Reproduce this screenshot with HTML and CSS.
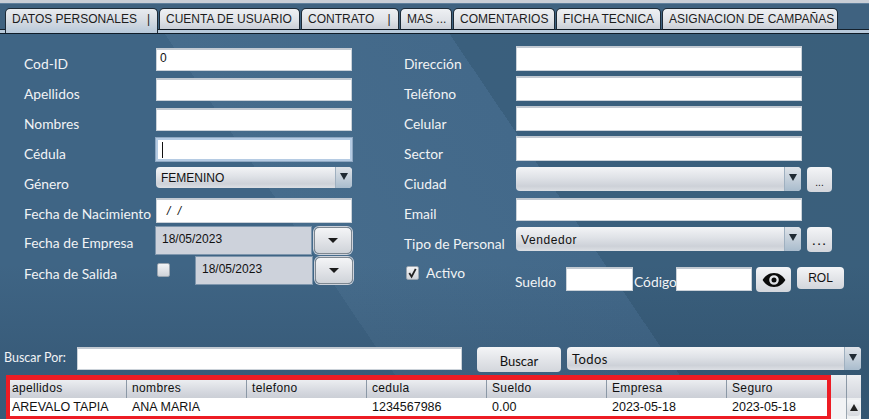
FILE: index.html
```html
<!DOCTYPE html>
<html lang="es">
<head>
<meta charset="utf-8">
<title>Datos personales</title>
<link rel="stylesheet" href="styles.css">
</head>
<body>
<div class="app">
  <nav class="tabs">
    <span class="tab tab-active w1">DATOS PERSONALES &nbsp;&nbsp;|</span>
    <span class="tab w2">CUENTA DE USUARIO</span>
    <span class="tab w3">CONTRATO &nbsp;&nbsp;&nbsp;|</span>
    <span class="tab w4">MAS ...</span>
    <span class="tab w5">COMENTARIOS</span>
    <span class="tab w6">FICHA TECNICA</span>
    <span class="tab w7">ASIGNACION DE CAMPAÑAS</span>
  </nav>
  <main class="panel">
    <section class="form">
      <div class="col col-left">
        <label class="lbl">Cod-ID</label><div class="field tb">0</div>
        <label class="lbl">Apellidos</label><div class="field"></div>
        <label class="lbl">Nombres</label><div class="field"></div>
        <label class="lbl">Cédula</label><div class="field focus"><span class="caret"></span></div>
        <label class="lbl">Género</label>
        <div class="combo combo-gen"><span class="combo-text gen-text">FEMENINO</span><span class="arrow"><i></i></span></div>
        <label class="lbl">Fecha de Nacimiento</label><div class="field tall date-mask">/ /</div>
        <label class="lbl lbl-dt">Fecha de Empresa</label>
        <div class="date-row">
          <div class="date-box">18/05/2023</div>
          <button class="spin"><i></i></button>
        </div>
        <label class="lbl">Fecha de Salida</label>
        <div class="date-row">
          <span class="check"></span>
          <div class="date-box date-short">18/05/2023</div>
          <button class="spin"><i></i></button>
        </div>
      </div>
      <div class="col col-right">
        <label class="lbl">Dirección</label><div class="field wide"></div>
        <label class="lbl">Teléfono</label><div class="field wide"></div>
        <label class="lbl">Celular</label><div class="field wide"></div>
        <label class="lbl">Sector</label><div class="field wide"></div>
        <label class="lbl">Ciudad</label>
        <div class="combo-line">
          <div class="combo combo-city"><span class="combo-text"></span><span class="arrow"><i></i></span></div>
          <button class="mini small-dots">...</button>
        </div>
        <label class="lbl">Email</label><div class="field wide short"></div>
        <label class="lbl">Tipo de Personal</label>
        <div class="combo-line">
          <div class="combo combo-city"><span class="combo-text spaced">Vendedor</span><span class="arrow"><i></i></span></div>
          <button class="mini big-dots">...</button>
        </div>
        <div class="active"><span class="check checked"><svg viewBox="0 0 12 12"><path d="M2.500 6 L5 10 L9.500 1.500" fill="none" stroke="#222" stroke-width="2"/></svg></span><span class="lbl-inline">Activo</span></div>
        <div class="money">
          <span class="lbl-inline sueldo">Sueldo</span>
          <div class="field f-sueldo"></div>
          <span class="lbl-inline codigo">Código</span>
          <div class="field f-codigo"></div>
          <button class="eye-btn"><svg viewBox="0 0 24 16" width="24" height="16"><path fill-rule="evenodd" d="M12 1C6.500 1 2.600 4.600 .6 8c2 3.400 5.900 7 11.400 7s9.400-3.600 11.400-7C21.400 4.600 17.500 1 12 1zm0 2.200a4.800 4.800 0 1 1 0 9.600 4.800 4.800 0 0 1 0-9.600zm0 2.300a2.500 2.500 0 1 0 0 5 2.500 2.500 0 0 0 0-5z" fill="#0a0a0a"/></svg></button>
          <button class="rol">ROL</button>
        </div>
      </div>
    </section>
    <section class="search">
      <span class="lbl-search">Buscar Por:</span>
      <div class="field f-search"></div>
      <button class="buscar">Buscar</button>
      <div class="combo combo-all"><span class="combo-text todos">Todos</span><span class="arrow"><i></i></span></div>
    </section>
    <section class="table-wrap">
      <div class="table-box">
        <div class="grid head">
          <span>apellidos</span><span>nombres</span><span>telefono</span><span>cedula</span><span>Sueldo</span><span>Empresa</span><span>Seguro</span>
        </div>
        <div class="grid data">
          <span>AREVALO TAPIA</span><span>ANA MARIA</span><span></span><span>1234567986</span><span>0.00</span><span>2023-05-18</span><span>2023-05-18</span>
        </div>
      </div>
      <div class="side">
        <div class="side-head"><span></span><span></span></div>
        <div class="scroll"><span class="scroll-btn"><i></i></span></div>
      </div>
    </section>
  </main>
</div>
</body>
</html>
```
FILE: styles.css
```css
* { box-sizing: border-box; }
html, body { margin: 0; padding: 0; }
body { width: 869px; height: 419px; overflow: hidden; font-family: "Liberation Sans", Arial, sans-serif; }
.app { width: 869px; height: 419px; display: flex; flex-direction: column; background: #3d627f; }

.tabs {
  height: 33px; display: flex; align-items: flex-start; padding: 8px 0 0 5px;
  background: linear-gradient(#c9ced6 0 3px, #5f7f9c 3px 4px, #3f6280 4px 29px, #14202c 29px 30px, #b7c9da 30px 33px);
}
.tab {
  height: 22px; margin-right: 1px; padding: 3px 0 0 6px; font-size: 12px; color: #1c1c1c; white-space: nowrap;
  background: linear-gradient(#eef0f3, #e0e3e8 55%, #c9ced6);
  border: 1px solid #1d2a36; border-bottom: 1px solid #0d1620; border-radius: 5px 5px 0 0;
}
.tab-active {
  height: 25px; border-bottom: 0; padding-left: 6px; padding-top: 3px;
  background: linear-gradient(#e8ebef, #d5dbe2 50%, #b7c9da);
}
.w1 { width: 153px; } .w2 { width: 141px; } .w3 { width: 98px; } .w4 { width: 52px; }
.w5 { width: 102px; } .w6 { width: 105px; } .w7 { width: 176px; }

.panel {
  flex: 1; position: relative; border-top: 1px solid #0f1c28;
  background:
    linear-gradient(rgba(20,40,60,0) 0 230px, rgba(20,40,60,.16) 330px),
    linear-gradient(56deg, #3f6585 0 352px, #466c8c 352px, #43698a 588px, #3a5f7d 588px, #3a5f7b 100%);
}

.form { display: flex; height: 313px; padding-top: 11px; }
.col { display: grid; align-content: start; }
.col-left { width: 404px; padding-left: 24px; grid-template-columns: 132px 248px; grid-template-rows: repeat(8, 30px); }
.col-right { flex: 1; grid-template-columns: 112px auto; grid-template-rows: repeat(8, 30px); }

.lbl { color: #f1f3f5; font: 13.8px/18px "Lato", "Noto Sans", sans-serif; padding-top: 10px; white-space: nowrap; }
.lbl-inline { color: #f1f3f5; font: 13.8px/18px "Lato", "Noto Sans", sans-serif; white-space: nowrap; }
.lbl-dt { padding-top: 9px; }

.field { background: #fff; border: 1px solid #cbd2d9; border-top: 2px solid #c3cad2; width: 196px; height: 23px; font-size: 12px; color: #111; padding: 1px 0 0 3px; margin-top: 3px; }
.col-right .field { margin-top: 1px; }
.wide { width: 286px; height: 25px; }
.col-right .short { height: 23px; margin-top: 3px; }
.tall { height: 25px; margin-top: 3px; }
.date-mask { padding-left: 10px; font-style: italic; padding-top: 4px; word-spacing: 4px; }
.focus { border: 2px solid #b5cbe3; box-shadow: 0 0 0 1px #8fa8c2; position: relative; }
.caret { display: block; width: 1px; height: 16px; background: #111; margin: 1px 0 0 1px; }

.combo { display: flex; height: 22px; border-radius: 4px; overflow: hidden; background: linear-gradient(#f3f4f6, #dfe2e7 45%, #cdd1d8 80%, #dcdfe4); margin-top: 3px; }
.combo-text { flex: 1; font-size: 12px; color: #111; padding: 3px 0 0 5px; }
.gen-text { padding-top: 4px; }
.spaced { letter-spacing: .6px; padding-top: 6px; }
.arrow { width: 17px; background: linear-gradient(#dfe3e8, #a9bccd); border-left: 1px solid #9fb0c0; display: flex; align-items: center; justify-content: center; }
.arrow i { width: 0; height: 0; border-left: 4px solid transparent; border-right: 4px solid transparent; border-top: 7px solid #1f2a33; margin-top: -3px; }
.combo-gen { width: 196px; height: 21px; margin-top: 2px; }
.combo-line { display: flex; gap: 6px; }
.combo-city { width: 285px; height: 24px; margin-top: 2px; }
.mini { width: 25px; height: 25px; margin-top: 2px; border: 0; border-radius: 4px; padding: 0; background: linear-gradient(#f4f5f7, #e3e5e9 50%, #d3d6dc); color: #111; cursor: pointer; font-family: "Liberation Sans", sans-serif; }
.small-dots { font-size: 10px; padding-top: 6px; }
.big-dots { font-size: 15px; letter-spacing: 1px; }

.date-row { display: flex; align-items: center; height: 30px; width: 198px; margin-left: -1px; }
.date-box { width: 157px; height: 29px; background: #cdd2db; border: 1px solid #7e96ad; font-size: 12px; color: #111; padding: 5px 0 0 6px; }
.date-short { width: 118px; margin-left: 25px; padding-left: 6px; }
.spin { width: 38px; height: 27px; margin-left: 2px; border: 1px solid #7d8790; border-radius: 5px; background: linear-gradient(#f4f5f7, #e2e4e8 50%, #cfd3d9); display: flex; align-items: center; justify-content: center; padding: 0; box-shadow: 0 0 0 1px #cdd2db; }
.spin i { width: 0; height: 0; border-left: 5px solid transparent; border-right: 5px solid transparent; border-top: 5px solid #1b1b1b; }

.check { display: block; width: 13px; height: 14px; margin-left: 2px; border-radius: 2px; background: linear-gradient(#f3f4f6, #cfd3d9); border: 1px solid #9aa5b0; flex: none; }
.checked svg { display: block; width: 11px; height: 12px; }

.active { display: flex; gap: 7px; align-items: center; height: 30px; margin-top: 3px; }
.money { display: flex; align-items: flex-start; height: 30px; margin-top: 13px; margin-left: -1px; }
.money .lbl-inline { padding-top: 5px; }
.sueldo { width: 51px; }
.codigo { width: 42px; }
.col-right .f-sueldo { width: 67px; height: 24px; margin: -1px 1px 0 0; }
.col-right .f-codigo { width: 76px; height: 24px; margin: -1px 4px 0 0; }
.eye-btn { width: 35px; height: 25px; margin-top: -1px; border: 0; border-radius: 4px; padding: 0; display: flex; align-items: center; justify-content: center; background: linear-gradient(#f4f5f7, #e3e5e9 50%, #d3d6dc); }
.rol { width: 47px; height: 22px; margin: -1px 0 0 6px; border: 0; border-radius: 4px; padding: 0; font: 12px "Liberation Sans", sans-serif; color: #111; background: linear-gradient(#f4f5f7, #e3e5e9 50%, #d3d6dc); }

.search { display: flex; align-items: flex-start; height: 28px; padding-left: 4px; }
.lbl-search { width: 73px; color: #f1f3f5; font: 12.5px/18px "Lato", sans-serif; padding-top: 2px; white-space: nowrap; }
.f-search { width: 385px; height: 23px; margin-top: 0; }
.buscar { width: 84px; height: 25px; margin-left: 15px; border: 0; border-radius: 4px; padding: 2px 0 0; font: 13px "Lato", sans-serif; color: #111; background: linear-gradient(#f4f5f7, #e3e5e9 50%, #d3d6dc); }
.combo-all { width: 294px; height: 23px; margin: 0 0 0 6px; }
.todos { font: 13px "Lato", sans-serif; padding-left: 5px; padding-top: 4px; letter-spacing: .4px; }

.table-wrap { display: flex; height: 44px; padding-left: 6px; }
.table-box { width: 825px; height: 44px; border: 4px solid #ed1c24; border-top-width: 5px; border-bottom-width: 3px; flex: none; }
.grid { display: grid; grid-template-columns: 117px repeat(6, 120px); font-size: 12px; color: #111; white-space: nowrap; }
.grid span { padding-left: 2px; overflow: hidden; }
.grid span + span { padding-left: 5px; }
.head { height: 19px; line-height: 17px; background: linear-gradient(#eceef1, #d3d6dd 70%, #cbcfd6); border-bottom: 1px solid #fff; letter-spacing: .35px; }
.head span { border-right: 1px solid #8b98a6; }
.head span:last-child { border-right: 0; }
.data { height: 17px; line-height: 17px; background: #fff; font-size: 12.5px; }
.side { width: 30px; flex: none; display: flex; flex-direction: column; background: #f2f3f5; }
.side-head { height: 23px; display: flex; background: linear-gradient(#eceef1, #d3d6dd); }
.side-head span { width: 15px; border-left: 1px solid #8b98a6; }
.side-head span:first-child { border-left: 0; }
.scroll { flex: 1; margin-left: 15px; background: #eef0f2; border-left: 1px solid #9aa5b0; padding: 2px 1px 0 0; }
.scroll-btn { display: flex; justify-content: center; padding-top: 4px; height: 16px; border-radius: 3px; background: linear-gradient(#f4f5f7, #d6d9de); }
.scroll-btn i { width: 0; height: 0; border-left: 4px solid transparent; border-right: 4px solid transparent; border-bottom: 7px solid #222; }
```
